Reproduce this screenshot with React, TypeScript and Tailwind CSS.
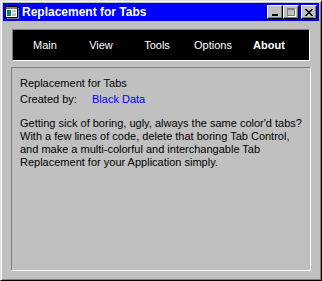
import React from "react";

const TABS = [
  { label: "Main", active: false },
  { label: "View", active: false },
  { label: "Tools", active: false },
  { label: "Options", active: false },
  { label: "About", active: true },
];

function CaptionButton({ children }: { children: React.ReactNode }) {
  return (
    <div className="flex h-[14px] w-[16px] items-center justify-center border-t border-l border-white border-r border-b border-r-black border-b-black bg-[#c0c0c0] shadow-[inset_-1px_-1px_#808080]">
      {children}
    </div>
  );
}

function AppIcon() {
  return (
    <svg width="16" height="16" viewBox="0 0 16 16" shapeRendering="crispEdges">
      <rect x="1" y="2" width="13" height="12" fill="#000" />
      <rect x="2" y="3" width="11" height="2" fill="#808080" />
      <rect x="2" y="5" width="11" height="8" fill="#fff" />
      <rect x="3" y="6" width="4" height="6" fill="#008080" />
      <rect x="8" y="6" width="4" height="2" fill="#c0c0c0" />
      <rect x="8" y="9" width="4" height="3" fill="#c0c0c0" />
      <rect x="14" y="4" width="1" height="10" fill="#808080" />
      <rect x="3" y="14" width="12" height="1" fill="#808080" />
    </svg>
  );
}

export default function App() {
  return (
    <div
      className="flex h-[281px] w-[322px] flex-col border-t border-l border-r border-b border-t-[#dfdfdf] border-l-[#dfdfdf] border-r-black border-b-black bg-[#c0c0c0] p-[2px] shadow-[inset_1px_1px_#fff,inset_-1px_-1px_#808080]"
      style={{ fontFamily: '"Liberation Sans", Arial, sans-serif' }}
    >
      {/* title bar */}
      <div className="flex h-[18px] items-center bg-[#0000ff] pl-[1px] pr-[2px]">
        <AppIcon />
        <span className="ml-[2px] text-[12px] font-bold leading-none text-white">
          Replacement for Tabs
        </span>
        <div className="ml-auto flex items-center">
          <CaptionButton>
            <div className="mt-[5px] h-[2px] w-[6px] bg-black" />
          </CaptionButton>
          <CaptionButton>
            <div className="h-[8px] w-[8px] border border-t-2 border-[#808080] shadow-[1px_1px_#fff]" />
          </CaptionButton>
          <div className="w-[2px]" />
          <CaptionButton>
            <svg width="8" height="7" viewBox="0 0 8 7" shapeRendering="crispEdges">
              <path d="M0 0h2v1h-2zM6 0h2v1h-2zM1 1h2v1h-2zM5 1h2v1h-2zM2 2h4v1h-4zM3 3h2v1h-2zM2 4h4v1h-4zM1 5h2v1h-2zM5 5h2v1h-2zM0 6h2v1h-2zM6 6h2v1h-2z" fill="#000" />
            </svg>
          </CaptionButton>
        </div>
      </div>

      {/* tab strip */}
      <div className="ml-[9px] mr-[9px] mt-[8px] flex h-[32px] items-center border-t border-l border-[#808080] border-r border-b border-r-white border-b-white bg-black px-[4px]">
        {TABS.map((t) => (
          <div
            key={t.label}
            className={`w-[56px] text-center text-[11px] text-white ${t.active ? "font-bold" : ""}`}
          >
            {t.label}
          </div>
        ))}
      </div>

      {/* content panel */}
      <div className="mb-[7px] ml-[8px] mr-[8px] mt-[6px] flex-1 border-t border-l border-[#808080] border-r border-b border-r-white border-b-white px-[8px] pt-[9px] text-[11px] leading-[13px] text-black">
        <div>Replacement for Tabs</div>
        <div className="mt-[3px] flex">
          <span className="w-[72px]">Created by:</span>
          <span className="text-[#0000ff]">Black Data</span>
        </div>
        <p className="mt-[11px]">
          Getting sick of boring, ugly, always the same color'd tabs? With a few lines of code,
          delete that boring Tab Control, and make a multi-colorful and interchangable Tab
          Replacement for your Application simply.
        </p>
      </div>
    </div>
  );
}
